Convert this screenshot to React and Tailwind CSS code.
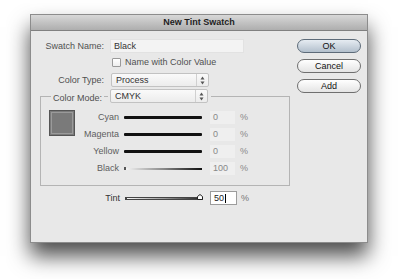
import React from "react";

const font = { fontFamily: '"Liberation Sans", Arial, sans-serif' };

function Stepper() {
  return (
    <div className="flex h-full items-center border-l border-[#d0d0d0] px-[3px]">
      <svg width="5" height="9" viewBox="0 0 5 9">
        <path d="M2.5 0.5 L4.5 3.5 L0.5 3.5 Z" fill="#555" />
        <path d="M2.5 8.5 L4.5 5.5 L0.5 5.5 Z" fill="#555" />
      </svg>
    </div>
  );
}

function Select({ value }) {
  return (
    <div className="flex h-[14px] w-[98px] items-center justify-between rounded-[2px] border border-[#c2c2c2] bg-gradient-to-b from-[#fafafa] to-[#ececec]">
      <span className="pl-[4px] text-[9px] leading-none text-[#333]">{value}</span>
      <Stepper />
    </div>
  );
}

function Button({ children, primary }) {
  return (
    <div
      className={
        "flex h-[14px] w-[64px] items-center justify-center rounded-full border text-[9px] leading-none text-[#111] " +
        (primary
          ? "border-[#5d6b79] bg-gradient-to-b from-[#e6ecf2] to-[#b3c0cd]"
          : "border-[#6f6f6f] bg-gradient-to-b from-[#ffffff] to-[#e4e4e4]")
      }
    >
      {children}
    </div>
  );
}

function SolidBar() {
  return <div className="h-[3px] w-[78px] rounded-[1px] bg-[#111]" />;
}

function GradBar() {
  return (
    <div className="flex w-[78px] items-center">
      <div className="h-[3px] w-[2px] bg-[#555]" />
      <div className="h-[2px] flex-1 bg-gradient-to-r from-[#f4f4f4] via-[#888] to-[#111]" />
    </div>
  );
}

function ValueRow({ label, bar, value }) {
  return (
    <div className="flex h-[13px] items-center">
      <div className="w-[44px] text-right text-[9px] leading-none text-[#5e5e5e]">{label}</div>
      <div className="ml-[5px]">{bar}</div>
      <div className="ml-[8px] flex h-[13px] w-[25px] items-center bg-[#efefef] pl-[3px] text-[9px] leading-none text-[#888]">
        {value}
      </div>
      <div className="ml-[5px] text-[9px] leading-none text-[#888]">%</div>
    </div>
  );
}

export default function App() {
  return (
    <div className="h-[279px] w-[400px] overflow-hidden bg-white" style={font}>
      <div className="ml-[30px] mt-[14px] flex h-[229px] w-[338px] flex-col border border-[#8c8c8c] bg-[#e8e8e8] shadow-[0_13px_20px_rgba(0,0,0,0.7)]">
        <div className="flex h-[16px] items-center justify-center border-b border-[#808080] bg-gradient-to-b from-[#d8d8d8] to-[#aeaeae] text-[9px] font-bold leading-none text-[#1e1e1e]">
          New Tint Swatch
        </div>
        <div className="flex">
          <div className="w-[266px] pt-[8px]">
            <div className="flex h-[14px] items-center">
              <div className="w-[73px] text-right text-[9px] leading-none text-[#505050]">Swatch Name:</div>
              <div className="ml-[6px] flex h-[14px] w-[134px] items-center border border-[#e2e2e2] bg-[#f3f3f3] pl-[3px] text-[9px] leading-none text-[#333]">
                Black
              </div>
            </div>
            <div className="mt-[4px] flex h-[11px] items-center pl-[81px]">
              <div className="h-[9px] w-[9px] rounded-[1px] border border-[#9a9a9a] bg-gradient-to-b from-white to-[#eeeeee]" />
              <span className="ml-[4px] text-[9px] leading-none text-[#505050]">Name with Color Value</span>
            </div>
            <div className="mt-[5px] flex h-[14px] items-center">
              <div className="w-[73px] text-right text-[9px] leading-none text-[#505050]">Color Type:</div>
              <div className="ml-[7px]">
                <Select value="Process" />
              </div>
            </div>
            <div className="ml-[9px] mt-[9px] h-[90px] w-[250px] border border-[#b4b4b4]">
              <div className="-mt-[8px] flex h-[14px] items-center">
                <div className="w-[63px] text-right">
                  <span className="bg-[#e8e8e8] px-[2px] text-[9px] leading-none text-[#505050]">Color Mode:</span>
                </div>
                <div className="ml-[4px] bg-[#e8e8e8] pl-[2px] pr-[3px]">
                  <Select value="CMYK" />
                </div>
              </div>
              <div className="flex items-start">
                <div className="ml-[8px] mt-[7px] flex h-[26px] w-[26px] border border-[#555] bg-[#7b7b7b] p-0">
                  <div className="m-[1px] flex-1 border border-[#9a9a9a] bg-[#7a7a7a]" />
                </div>
                <div className="mt-[8px] flex flex-col gap-[4px]">
                  <ValueRow label="Cyan" bar={<SolidBar />} value="0" />
                  <ValueRow label="Magenta" bar={<SolidBar />} value="0" />
                  <ValueRow label="Yellow" bar={<SolidBar />} value="0" />
                  <ValueRow label="Black" bar={<GradBar />} value="100" />
                </div>
              </div>
            </div>
            <div className="mt-[5px] flex h-[14px] items-center">
              <div className="w-[89px] text-right text-[9px] leading-none text-[#333]">Tint</div>
              <div className="relative ml-[5px] flex w-[78px] items-center">
                <div className="h-[3px] w-[2px] bg-[#444]" />
                <div className="h-[3px] flex-1 border-y border-[#444] bg-gradient-to-r from-[#f8f8f8] via-[#999] to-[#222]" />
                <svg className="absolute -top-[3px] right-[0px]" width="6" height="6" viewBox="0 0 6 6">
                  <path d="M0.5 5.5 L0.5 2.5 L3 0.5 L5.5 2.5 L5.5 5.5 Z" fill="#fff" stroke="#222" strokeWidth="1" />
                </svg>
              </div>
              <div className="ml-[7px] flex h-[14px] w-[27px] items-center border border-[#9c9c9c] bg-white pl-[3px] text-[9px] leading-none text-[#222]">
                50<span className="ml-[1px] inline-block h-[9px] w-[1px] bg-black" />
              </div>
              <div className="ml-[4px] text-[9px] leading-none text-[#777]">%</div>
            </div>
          </div>
          <div className="flex flex-col gap-[6px] pt-[8px]">
            <Button primary>OK</Button>
            <Button>Cancel</Button>
            <Button>Add</Button>
          </div>
        </div>
      </div>
    </div>
  );
}
